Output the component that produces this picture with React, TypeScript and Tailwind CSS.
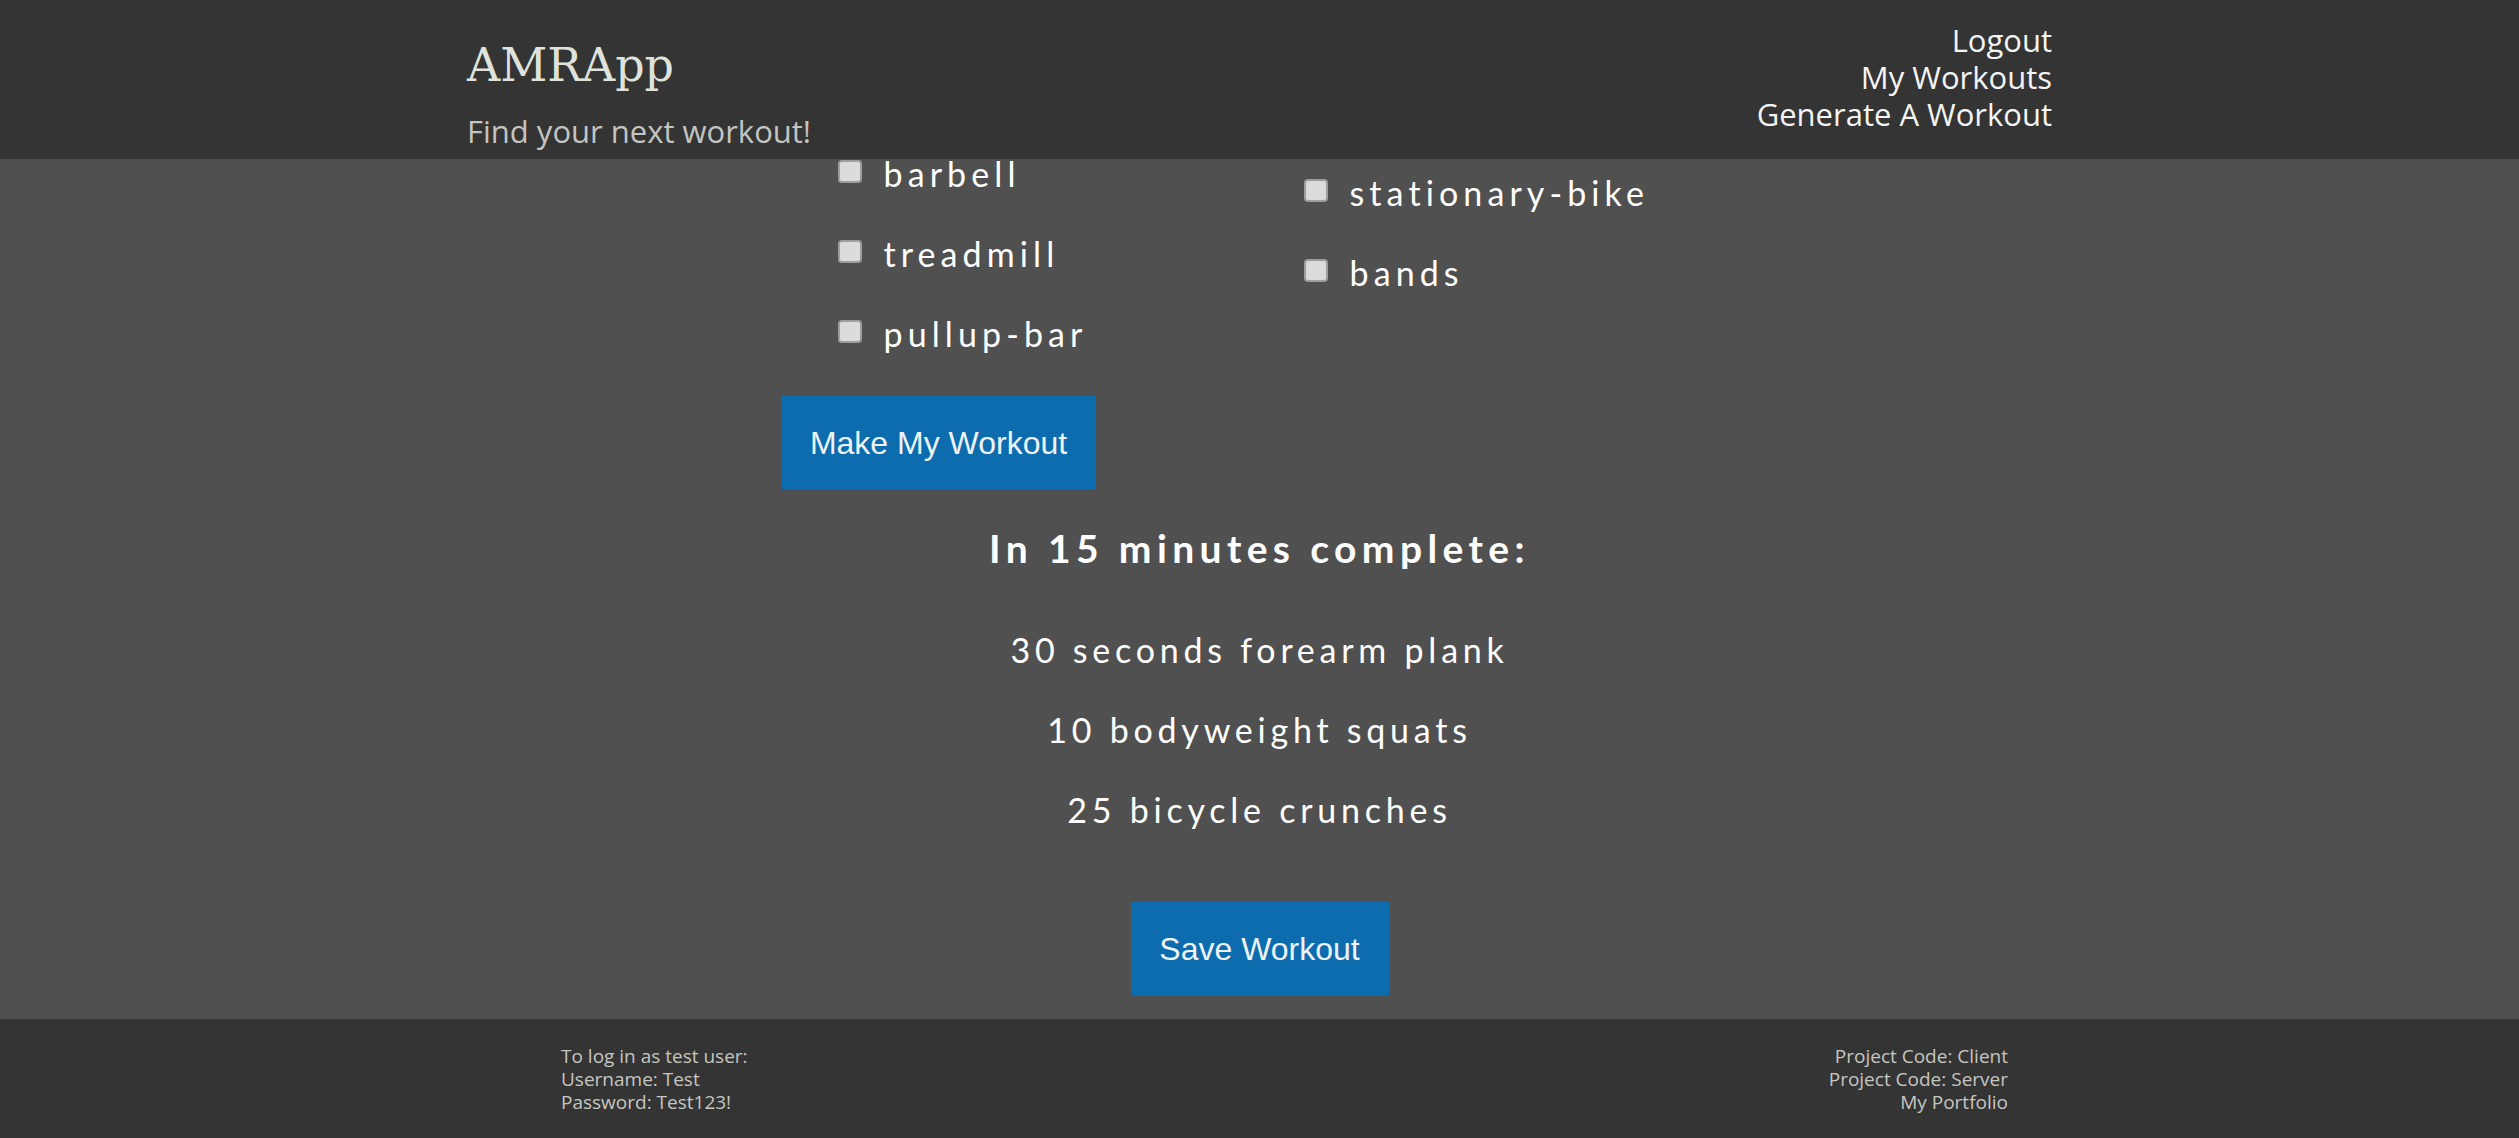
import React from "react"

const leftEquipment = ["barbell", "treadmill", "pullup-bar"]
const rightEquipment = ["stationary-bike", "bands"]
const workout = ["30 seconds forearm plank", "10 bodyweight squats", "25 bicycle crunches"]

function Check({ label }: { label: string }) {
  return (
    <label className="flex items-start h-[30px] gap-[22px]">
      <span className="mt-[1px] w-[24px] h-[23px] rounded-[4px] border-2 border-[#9e9e9e] bg-[#dcdcdc] shrink-0" />
      <span className="text-[34px] leading-[30px] tracking-[0.15em] text-white">{label}</span>
    </label>
  )
}

export default function App() {
  return (
    <div className="min-h-screen bg-[#505050] font-['Lato',sans-serif]">
      <header className="h-[159px] bg-[#333433]">
        <div className="w-[1585px] mx-auto flex justify-between">
          <div className="pt-[42px]">
            <h1 className="font-['DejaVu_Serif',serif] text-[46px] leading-none text-[#dfe3dc]">AMRApp</h1>
            <p className="mt-[28px] font-['Open_Sans',sans-serif] text-[31px] leading-none text-[#c4c4c0]">
              Find your next workout!
            </p>
          </div>
          <nav className="pt-[22px] flex flex-col items-end font-['Open_Sans',sans-serif] text-[31px] leading-[37px] text-[#f4f4f4]">
            <a>Logout</a>
            <a>My Workouts</a>
            <a>Generate A Workout</a>
          </nav>
        </div>
      </header>

      <main className="pb-[23px]">
        <div className="w-[956px] mx-auto">
          <div className="grid grid-cols-[466px_1fr] pl-[56px]">
            <div className="flex flex-col gap-[50px]">
              {leftEquipment.map(e => (
                <Check key={e} label={e} />
              ))}
            </div>
            <div className="flex flex-col gap-[50px] pt-[19px]">
              {rightEquipment.map(e => (
                <Check key={e} label={e} />
              ))}
            </div>
          </div>
          <button className="mt-[47px] h-[93px] w-[314px] bg-[#0c6cae] font-['Liberation_Sans',sans-serif] text-[32px] text-[#eef2f5]">
            Make My Workout
          </button>
        </div>

        <div className="mt-[40px] flex flex-col items-center">
          <h2 className="text-[39px] leading-none font-bold tracking-[0.138em] text-white">In 15 minutes complete:</h2>
          <div className="mt-[67px] flex flex-col items-center gap-[50px]">
            {workout.map(w => (
              <p key={w} className="text-[34px] leading-[30px] tracking-[0.14em] text-white">{w}</p>
            ))}
          </div>
          <button className="mt-[77px] h-[94px] w-[258px] bg-[#0c6cae] font-['Liberation_Sans',sans-serif] text-[32px] text-[#eef2f5]">
            Save Workout
          </button>
        </div>
      </main>

      <footer className="bg-[#333433] pt-[26px] pb-[24px] pl-[561px] pr-[511px] flex justify-between font-['Open_Sans',sans-serif] text-[19px] leading-[23px] text-[#c6c6c0]">
        <div>
          <p>To log in as test user:</p>
          <p>Username: Test</p>
          <p>Password: Test123!</p>
        </div>
        <div className="flex flex-col items-end">
          <a>Project Code: Client</a>
          <a>Project Code: Server</a>
          <a>My Portfolio</a>
        </div>
      </footer>
    </div>
  )
}
